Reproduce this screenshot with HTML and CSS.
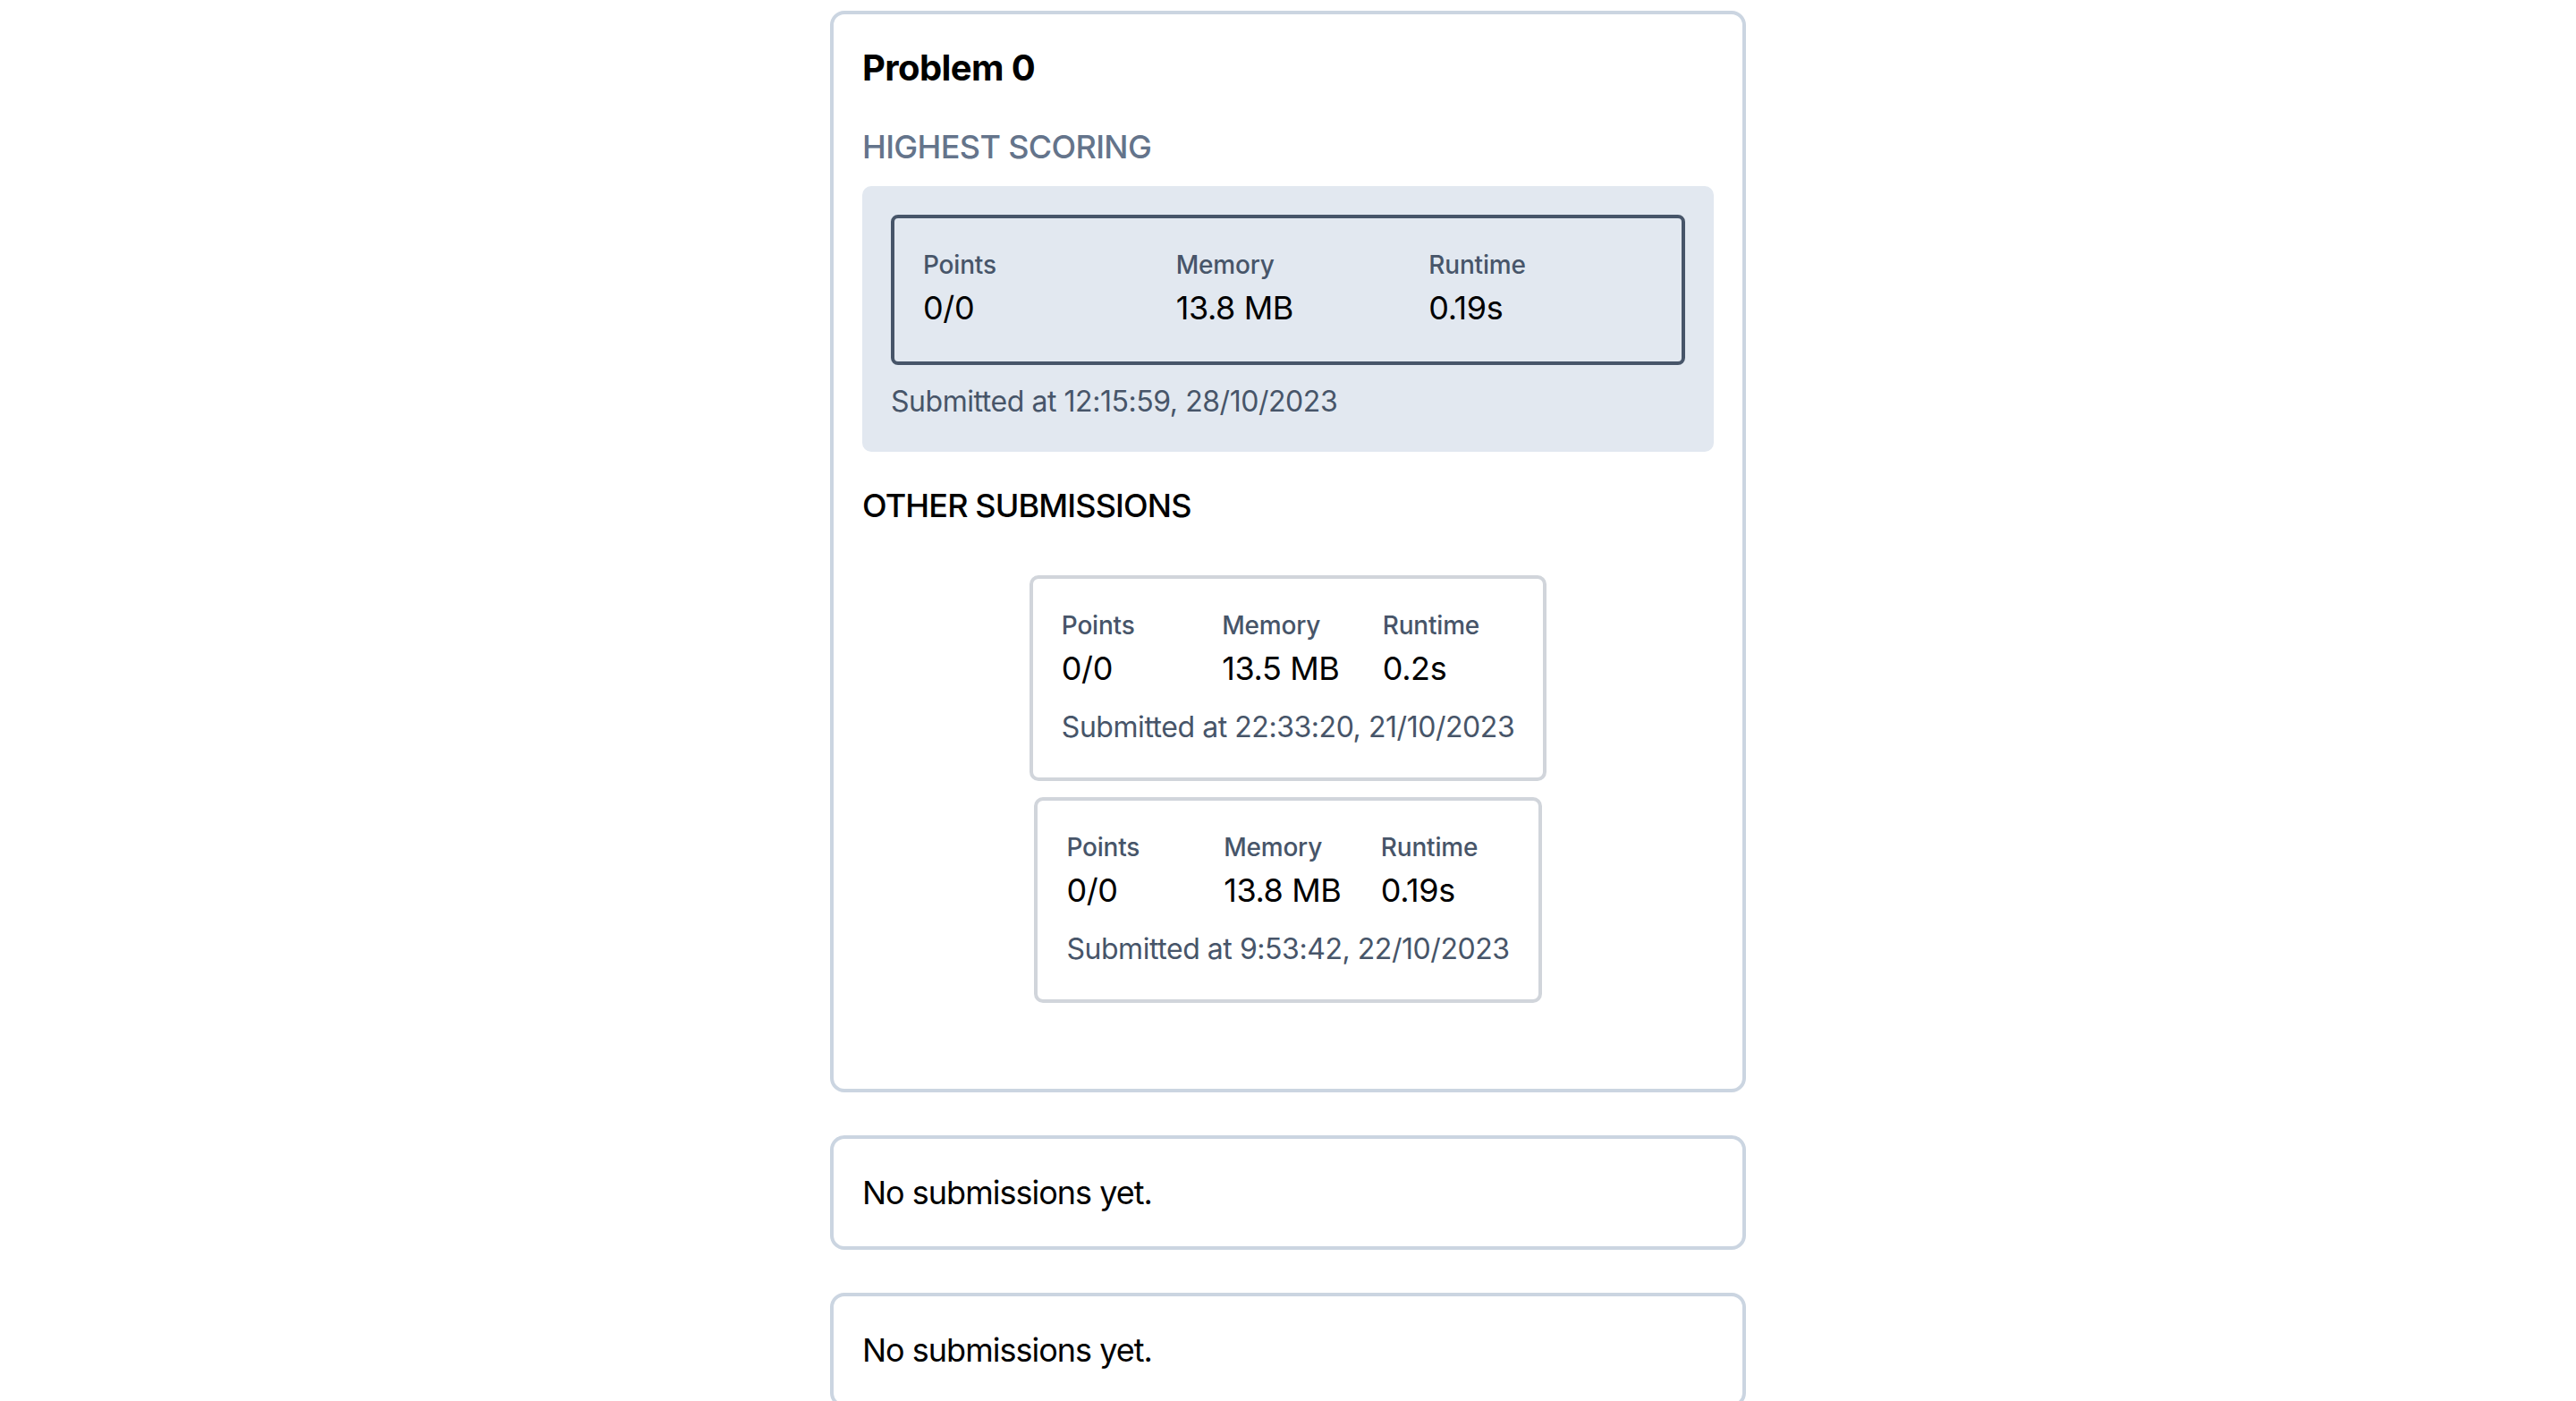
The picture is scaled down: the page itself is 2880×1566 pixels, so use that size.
FILE: index.html
```html
<!DOCTYPE html>
<html lang="en">
<head>
<meta charset="utf-8">
<title>Submissions</title>
<link rel="stylesheet" href="styles.css">
</head>
<body>
<main class="page">
  <section class="card">
    <h2 class="problem-title">Problem 0</h2>
    <h3 class="section-label muted">HIGHEST SCORING</h3>
    <div class="best-panel">
      <div class="best-box">
        <div class="stats">
          <div class="stat"><div class="stat-label">Points</div><div class="stat-value">0/0</div></div>
          <div class="stat"><div class="stat-label">Memory</div><div class="stat-value">13.8 MB</div></div>
          <div class="stat"><div class="stat-label">Runtime</div><div class="stat-value">0.19s</div></div>
        </div>
      </div>
      <p class="submitted best-submitted">Submitted at 12:15:59, 28/10/2023</p>
    </div>
    <h3 class="section-label other">OTHER SUBMISSIONS</h3>
    <div class="other-list">
      <div class="sub-card">
        <div class="stats">
          <div class="stat"><div class="stat-label">Points</div><div class="stat-value">0/0</div></div>
          <div class="stat"><div class="stat-label">Memory</div><div class="stat-value">13.5 MB</div></div>
          <div class="stat"><div class="stat-label">Runtime</div><div class="stat-value">0.2s</div></div>
        </div>
        <p class="submitted sub-submitted">Submitted at 22:33:20, 21/10/2023</p>
      </div>
      <div class="sub-card">
        <div class="stats">
          <div class="stat"><div class="stat-label">Points</div><div class="stat-value">0/0</div></div>
          <div class="stat"><div class="stat-label">Memory</div><div class="stat-value">13.8 MB</div></div>
          <div class="stat"><div class="stat-label">Runtime</div><div class="stat-value">0.19s</div></div>
        </div>
        <p class="submitted sub-submitted">Submitted at 9:53:42, 22/10/2023</p>
      </div>
    </div>
  </section>
  <section class="card empty-card">
    <p class="empty-text">No submissions yet.</p>
  </section>
  <section class="card empty-card">
    <p class="empty-text">No submissions yet.</p>
  </section>
</main>
</body>
</html>
```
FILE: styles.css
```css
* { box-sizing: border-box; }
html, body { margin: 0; padding: 0; background: #ffffff; }
body {
  font-family: Inter, "Noto Sans", "Liberation Sans", sans-serif;
  color: #000000;
}
.page {
  display: flex;
  flex-direction: column;
  align-items: center;
  gap: 48px;
  padding-top: 12px;
}
.card {
  width: 1024px;
  border: 4px solid #cbd5e1;
  border-radius: 16px;
  padding: 32px;
  background: #fff;
}
.problem-title {
  margin: 0;
  font-size: 40px;
  line-height: 56px;
  font-weight: 700;
  letter-spacing: -0.6px;
}
.section-label {
  margin: 32px 0 0;
  font-size: 36px;
  line-height: 56px;
  font-weight: 500;
}
.muted { color: #64748b; letter-spacing: -0.65px; }
.other { color: #000; letter-spacing: -0.85px; }
.best-panel {
  margin-top: 16px;
  background: #e2e8f0;
  border-radius: 10px;
  padding: 32px;
}
.best-box {
  border: 4px solid #475569;
  border-radius: 8px;
  padding: 32px;
}
.stats {
  display: grid;
  grid-template-columns: repeat(3, 1fr);
  column-gap: 32px;
}
.stat-label {
  font-size: 28px;
  line-height: 40px;
  font-weight: 500;
  color: #475569;
  letter-spacing: -0.2px;
}
.stat-value {
  font-size: 36px;
  line-height: 56px;
  color: #000;
  letter-spacing: -0.4px;
}
.submitted {
  margin: 0;
  font-size: 32px;
  line-height: 48px;
  color: #475569;
  letter-spacing: -0.45px;
  white-space: nowrap;
}
.best-submitted { margin-top: 17px; }
.sub-submitted { margin-top: 14px; }
.other-list {
  display: flex;
  flex-direction: column;
  align-items: center;
  gap: 18px;
  padding-top: 50px;
  padding-bottom: 64px;
}
.sub-card {
  width: fit-content;
  border: 4px solid #d1d5db;
  border-radius: 10px;
  padding: 32px;
}
.empty-text {
  margin: 0;
  font-size: 36px;
  line-height: 56px;
  letter-spacing: -1px;
}
```
